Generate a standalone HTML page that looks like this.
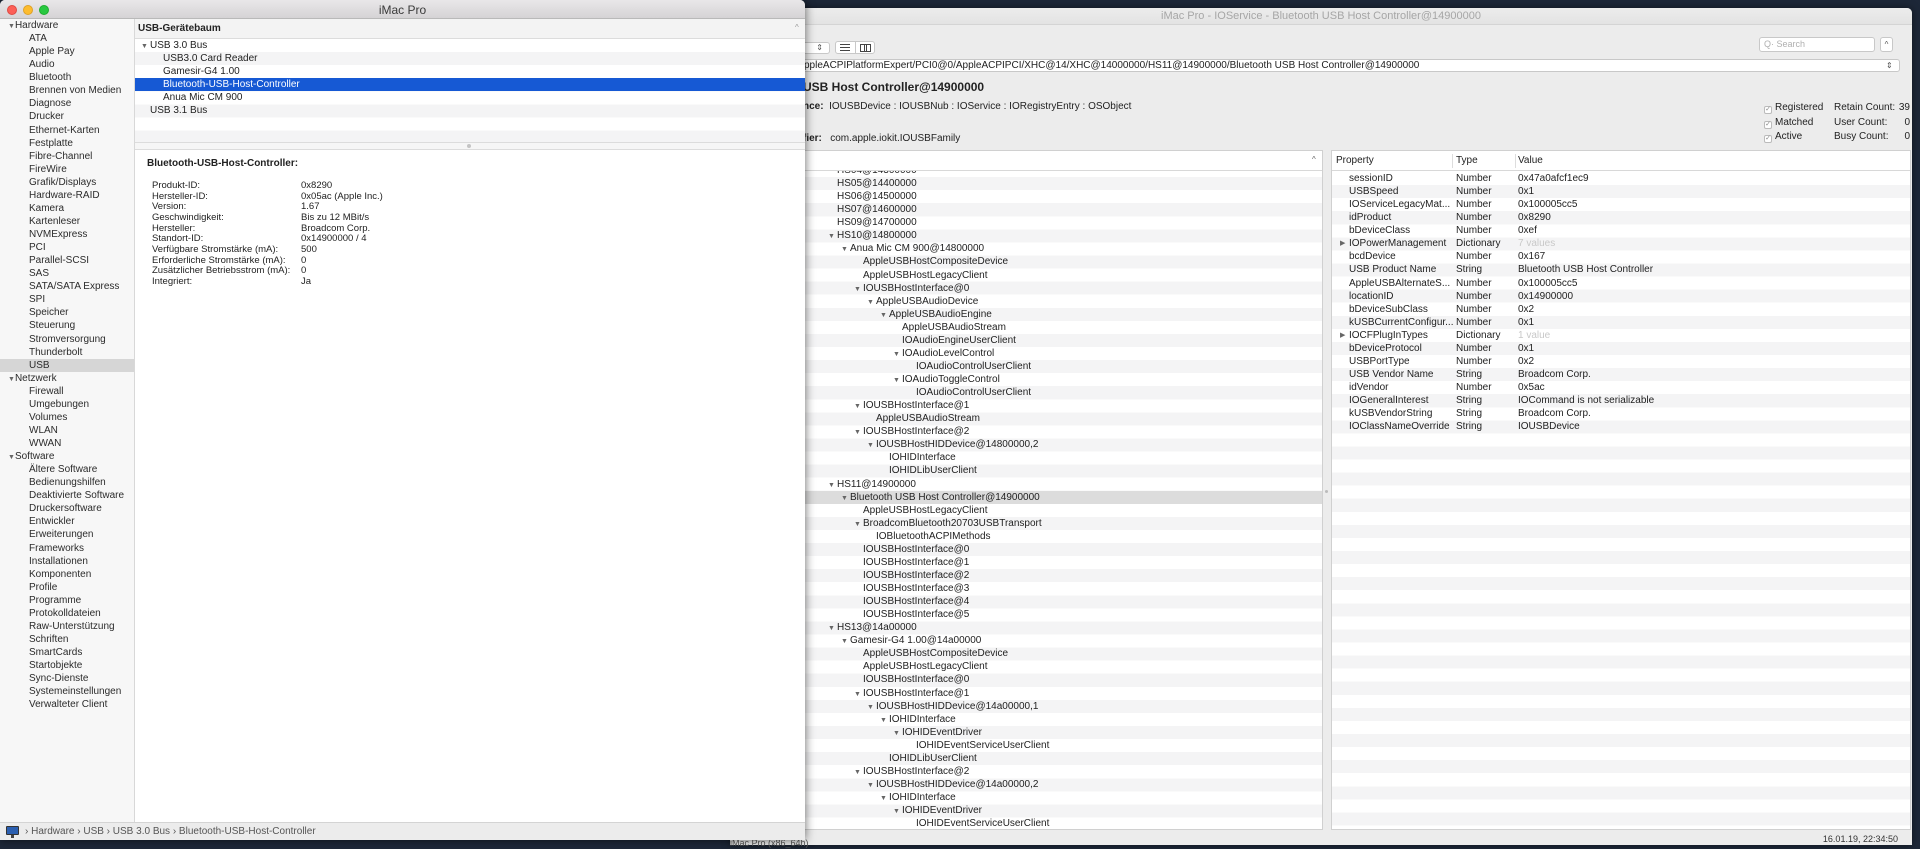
<!DOCTYPE html>
<html><head><meta charset="utf-8"><style>
*{margin:0;padding:0;box-sizing:border-box}
body{width:1920px;height:849px;overflow:hidden;background:#1d2738;font-family:"Liberation Sans",sans-serif;font-size:10px;color:#222;position:relative}
.a{position:absolute;white-space:nowrap}
#rw{position:absolute;left:730px;top:8px;width:1182px;height:837px;background:#ececec;border-radius:5px 5px 0 0;box-shadow:0 0 8px rgba(0,0,0,.5)}
#lw{position:absolute;left:0;top:0;width:805px;height:840px;background:#fff;border-radius:5px 5px 0 0;box-shadow:0 0 10px rgba(0,0,0,.6);overflow:hidden;z-index:5}
.rows div{height:13.07px;line-height:13.07px;white-space:nowrap}
.t{font-size:7px;color:#666;display:inline-block;width:9px;margin-left:-9px;text-align:left}
.stripe{background:repeating-linear-gradient(#fff 0 13.07px,#f4f4f5 13.07px 26.14px)}
.sb div{height:13.07px;line-height:13.07px;padding-left:29px;color:#2b2b2b}
.sb div.h{padding-left:8px}
.cb{display:inline-block;width:8px;height:8px;border:1px solid #bbb;border-radius:2px;background:#fff;font-size:7px;line-height:6px;color:#888;text-align:center;margin-right:3px;vertical-align:-1px}
</style></head><body>

<!-- Right window -->
<div id="rw">
 <div class="a" style="left:0;top:0;width:1182px;height:17px;background:linear-gradient(#ececec,#e3e3e3);border-radius:5px 5px 0 0;border-bottom:1px solid #d4d4d4"></div>
 <div class="a" style="left:0;top:2px;width:1182px;text-align:center;font-size:11px;color:#a6a6a6">iMac Pro - IOService - Bluetooth USB Host Controller@14900000</div>
</div>
<!-- toolbar -->
<div class="a" style="left:790px;top:42px;width:40px;height:12px;background:#fff;border:1px solid #c8c8c8;border-radius:3px;z-index:2;font-size:8px;text-align:right;padding-right:6px;line-height:10px;color:#555">⇕</div>
<div class="a" style="left:835px;top:41px;width:40px;height:13px;background:#fff;border:1px solid #c8c8c8;border-radius:3px;z-index:2"></div>
<div class="a" style="left:855px;top:41px;width:1px;height:13px;background:#c8c8c8;z-index:2"></div>
<div class="a" style="left:840px;top:44px;width:10px;height:7px;border-top:1px solid #444;border-bottom:1px solid #444;z-index:2"></div>
<div class="a" style="left:840px;top:47px;width:10px;height:1px;background:#444;z-index:2"></div>
<div class="a" style="left:860px;top:44px;width:11px;height:8px;border:1px solid #444;z-index:2"></div>
<div class="a" style="left:864px;top:44px;width:3px;height:8px;border-left:1px solid #444;border-right:1px solid #444;z-index:2"></div>
<div class="a" style="left:1759px;top:37px;width:116px;height:15px;background:#fff;border:1px solid #c8c8c8;border-radius:3px;z-index:2;color:#b0b0b0;font-size:9px;line-height:13px;padding-left:4px">Q· Search</div>
<div class="a" style="left:1880px;top:37px;width:13px;height:15px;background:#fff;border:1px solid #c8c8c8;border-radius:3px;z-index:2;font-size:8px;text-align:center;line-height:13px;color:#555">^</div>
<div class="a" style="left:790px;top:59px;width:1110px;height:13px;background:#fff;border:1px solid #c8c8c8;border-radius:3px;z-index:2"></div>
<div class="a" style="left:804px;top:59px;line-height:13px;font-size:10px;z-index:2">ppleACPIPlatformExpert/PCI0@0/AppleACPIPCI/XHC@14/XHC@14000000/HS11@14900000/Bluetooth USB Host Controller@14900000</div>
<div class="a" style="left:1886px;top:59px;line-height:13px;font-size:8px;color:#555;z-index:2">⇕</div>
<div class="a" style="left:803px;top:80px;font-size:12px;font-weight:bold;z-index:2">USB Host Controller@14900000</div>
<div class="a" style="left:803px;top:101px;font-size:10px;z-index:2"><b>nce:</b>&nbsp; IOUSBDevice : IOUSBNub : IOService : IORegistryEntry : OSObject</div>
<div class="a" style="left:803px;top:133px;font-size:10px;z-index:2"><b>fier:</b>&nbsp;&nbsp; com.apple.iokit.IOUSBFamily</div>
<div class="a" style="left:1764px;top:101px;font-size:10px;z-index:2;line-height:14.5px"><div><span class="cb">✓</span>Registered</div><div><span class="cb">✓</span>Matched</div><div><span class="cb">✓</span>Active</div></div>
<div class="a" style="left:1834px;top:101px;font-size:10px;z-index:2;line-height:14.5px;width:76px"><div>Retain Count:<span style="float:right">39</span></div><div>User Count:<span style="float:right">0</span></div><div>Busy Count:<span style="float:right">0</span></div></div>

<!-- tree pane -->
<div class="a" style="left:740px;top:150px;width:583px;height:680px;background:#fff;border:1px solid #d0d0d0;overflow:hidden;z-index:2">
 <div class="a" style="left:0;top:0;width:583px;height:20px;background:#fff;border-bottom:1px solid #d8d8d8;z-index:3"></div>
 <div class="a" style="left:571px;top:4px;font-size:8px;color:#666;z-index:3">^</div>
 <div class="a rows stripe" style="left:0;top:13px;width:583px;height:680px">
<div style="padding-left:96px">HS04@14300000</div>
<div style="padding-left:96px">HS05@14400000</div>
<div style="padding-left:96px">HS06@14500000</div>
<div style="padding-left:96px">HS07@14600000</div>
<div style="padding-left:96px">HS09@14700000</div>
<div style="padding-left:96px"><span class="t">▼</span>HS10@14800000</div>
<div style="padding-left:109px"><span class="t">▼</span>Anua Mic CM 900@14800000</div>
<div style="padding-left:122px">AppleUSBHostCompositeDevice</div>
<div style="padding-left:122px">AppleUSBHostLegacyClient</div>
<div style="padding-left:122px"><span class="t">▼</span>IOUSBHostInterface@0</div>
<div style="padding-left:135px"><span class="t">▼</span>AppleUSBAudioDevice</div>
<div style="padding-left:148px"><span class="t">▼</span>AppleUSBAudioEngine</div>
<div style="padding-left:161px">AppleUSBAudioStream</div>
<div style="padding-left:161px">IOAudioEngineUserClient</div>
<div style="padding-left:161px"><span class="t">▼</span>IOAudioLevelControl</div>
<div style="padding-left:175px">IOAudioControlUserClient</div>
<div style="padding-left:161px"><span class="t">▼</span>IOAudioToggleControl</div>
<div style="padding-left:175px">IOAudioControlUserClient</div>
<div style="padding-left:122px"><span class="t">▼</span>IOUSBHostInterface@1</div>
<div style="padding-left:135px">AppleUSBAudioStream</div>
<div style="padding-left:122px"><span class="t">▼</span>IOUSBHostInterface@2</div>
<div style="padding-left:135px"><span class="t">▼</span>IOUSBHostHIDDevice@14800000,2</div>
<div style="padding-left:148px">IOHIDInterface</div>
<div style="padding-left:148px">IOHIDLibUserClient</div>
<div style="padding-left:96px"><span class="t">▼</span>HS11@14900000</div>
<div style="padding-left:109px;background:#dcdcdc"><span class="t">▼</span>Bluetooth USB Host Controller@14900000</div>
<div style="padding-left:122px">AppleUSBHostLegacyClient</div>
<div style="padding-left:122px"><span class="t">▼</span>BroadcomBluetooth20703USBTransport</div>
<div style="padding-left:135px">IOBluetoothACPIMethods</div>
<div style="padding-left:122px">IOUSBHostInterface@0</div>
<div style="padding-left:122px">IOUSBHostInterface@1</div>
<div style="padding-left:122px">IOUSBHostInterface@2</div>
<div style="padding-left:122px">IOUSBHostInterface@3</div>
<div style="padding-left:122px">IOUSBHostInterface@4</div>
<div style="padding-left:122px">IOUSBHostInterface@5</div>
<div style="padding-left:96px"><span class="t">▼</span>HS13@14a00000</div>
<div style="padding-left:109px"><span class="t">▼</span>Gamesir-G4 1.00@14a00000</div>
<div style="padding-left:122px">AppleUSBHostCompositeDevice</div>
<div style="padding-left:122px">AppleUSBHostLegacyClient</div>
<div style="padding-left:122px">IOUSBHostInterface@0</div>
<div style="padding-left:122px"><span class="t">▼</span>IOUSBHostInterface@1</div>
<div style="padding-left:135px"><span class="t">▼</span>IOUSBHostHIDDevice@14a00000,1</div>
<div style="padding-left:148px"><span class="t">▼</span>IOHIDInterface</div>
<div style="padding-left:161px"><span class="t">▼</span>IOHIDEventDriver</div>
<div style="padding-left:175px">IOHIDEventServiceUserClient</div>
<div style="padding-left:148px">IOHIDLibUserClient</div>
<div style="padding-left:122px"><span class="t">▼</span>IOUSBHostInterface@2</div>
<div style="padding-left:135px"><span class="t">▼</span>IOUSBHostHIDDevice@14a00000,2</div>
<div style="padding-left:148px"><span class="t">▼</span>IOHIDInterface</div>
<div style="padding-left:161px"><span class="t">▼</span>IOHIDEventDriver</div>
<div style="padding-left:175px">IOHIDEventServiceUserClient</div>
 </div>
</div>
<div class="a" style="left:1325px;top:490px;width:3px;height:3px;border-radius:50%;background:#bbb;z-index:2"></div>

<!-- property pane -->
<div class="a" style="left:1331px;top:150px;width:580px;height:680px;background:#fff;border:1px solid #d0d0d0;overflow:hidden;z-index:2">
 <div class="a" style="left:0;top:0;width:580px;height:20px;background:#fff;border-bottom:1px solid #d8d8d8;z-index:3;line-height:20px">
  <span class="a" style="left:4px">Property</span><span class="a" style="left:120px;top:3px;width:1px;height:14px;background:#ddd"></span>
  <span class="a" style="left:124px">Type</span><span class="a" style="left:183px;top:3px;width:1px;height:14px;background:#ddd"></span>
  <span class="a" style="left:186px">Value</span>
 </div>
 <div class="a rows stripe" style="left:0;top:21px;width:580px;height:680px">
<div><span class="a" style="left:17px">sessionID</span><span class="a" style="left:124px">Number</span><span class="a" style="left:186px">0x47a0afcf1ec9</span></div>
<div><span class="a" style="left:17px">USBSpeed</span><span class="a" style="left:124px">Number</span><span class="a" style="left:186px">0x1</span></div>
<div><span class="a" style="left:17px">IOServiceLegacyMat...</span><span class="a" style="left:124px">Number</span><span class="a" style="left:186px">0x100005cc5</span></div>
<div><span class="a" style="left:17px">idProduct</span><span class="a" style="left:124px">Number</span><span class="a" style="left:186px">0x8290</span></div>
<div><span class="a" style="left:17px">bDeviceClass</span><span class="a" style="left:124px">Number</span><span class="a" style="left:186px">0xef</span></div>
<div><span class="a" style="left:8px;font-size:7px;color:#666">▶</span><span class="a" style="left:17px">IOPowerManagement</span><span class="a" style="left:124px">Dictionary</span><span class="a" style="left:186px;color:#c8c8c8">7 values</span></div>
<div><span class="a" style="left:17px">bcdDevice</span><span class="a" style="left:124px">Number</span><span class="a" style="left:186px">0x167</span></div>
<div><span class="a" style="left:17px">USB Product Name</span><span class="a" style="left:124px">String</span><span class="a" style="left:186px">Bluetooth USB Host Controller</span></div>
<div><span class="a" style="left:17px">AppleUSBAlternateS...</span><span class="a" style="left:124px">Number</span><span class="a" style="left:186px">0x100005cc5</span></div>
<div><span class="a" style="left:17px">locationID</span><span class="a" style="left:124px">Number</span><span class="a" style="left:186px">0x14900000</span></div>
<div><span class="a" style="left:17px">bDeviceSubClass</span><span class="a" style="left:124px">Number</span><span class="a" style="left:186px">0x2</span></div>
<div><span class="a" style="left:17px">kUSBCurrentConfigur...</span><span class="a" style="left:124px">Number</span><span class="a" style="left:186px">0x1</span></div>
<div><span class="a" style="left:8px;font-size:7px;color:#666">▶</span><span class="a" style="left:17px">IOCFPlugInTypes</span><span class="a" style="left:124px">Dictionary</span><span class="a" style="left:186px;color:#c8c8c8">1 value</span></div>
<div><span class="a" style="left:17px">bDeviceProtocol</span><span class="a" style="left:124px">Number</span><span class="a" style="left:186px">0x1</span></div>
<div><span class="a" style="left:17px">USBPortType</span><span class="a" style="left:124px">Number</span><span class="a" style="left:186px">0x2</span></div>
<div><span class="a" style="left:17px">USB Vendor Name</span><span class="a" style="left:124px">String</span><span class="a" style="left:186px">Broadcom Corp.</span></div>
<div><span class="a" style="left:17px">idVendor</span><span class="a" style="left:124px">Number</span><span class="a" style="left:186px">0x5ac</span></div>
<div><span class="a" style="left:17px">IOGeneralInterest</span><span class="a" style="left:124px">String</span><span class="a" style="left:186px">IOCommand is not serializable</span></div>
<div><span class="a" style="left:17px">kUSBVendorString</span><span class="a" style="left:124px">String</span><span class="a" style="left:186px">Broadcom Corp.</span></div>
<div><span class="a" style="left:17px">IOClassNameOverride</span><span class="a" style="left:124px">String</span><span class="a" style="left:186px">IOUSBDevice</span></div>
 </div>
</div>
<div class="a" style="left:730px;top:838px;font-size:9px;color:#555;z-index:2">iMac Pro (x86_64h)</div>
<div class="a" style="left:1820px;top:834px;width:78px;text-align:right;font-size:9px;color:#333;z-index:2">16.01.19, 22:34:50</div>

<!-- Left window -->
<div id="lw">
 <div class="a" style="left:0;top:0;width:805px;height:19px;background:linear-gradient(#e9e7e9,#d5d3d5);border-bottom:1px solid #b9b9b9"></div>
 <div class="a" style="left:0;top:3px;width:805px;text-align:center;font-size:12px;color:#3a3a3a">iMac Pro</div>
 <div class="a" style="left:7px;top:5px;width:10px;height:10px;border-radius:50%;background:#fc5f57;border:.5px solid #de4a42"></div>
 <div class="a" style="left:23px;top:5px;width:10px;height:10px;border-radius:50%;background:#fdbc2e;border:.5px solid #dea127"></div>
 <div class="a" style="left:39px;top:5px;width:10px;height:10px;border-radius:50%;background:#28c840;border:.5px solid #1fac2e"></div>

 <div class="a" style="left:0;top:19px;width:135px;height:803px;background:#f7f7f7;border-right:1px solid #d8d8d8"></div>
 <div class="a" style="left:0;top:359px;width:134px;height:13px;background:#d6d6d6"></div>
 <div class="a sb" style="left:0;top:19px;width:135px">
<div class="h"><span style="font-size:7px;color:#666">▼</span>Hardware</div>
<div>ATA</div><div>Apple Pay</div><div>Audio</div><div>Bluetooth</div><div>Brennen von Medien</div><div>Diagnose</div><div>Drucker</div><div>Ethernet-Karten</div><div>Festplatte</div><div>Fibre-Channel</div><div>FireWire</div><div>Grafik/Displays</div><div>Hardware-RAID</div><div>Kamera</div><div>Kartenleser</div><div>NVMExpress</div><div>PCI</div><div>Parallel-SCSI</div><div>SAS</div><div>SATA/SATA Express</div><div>SPI</div><div>Speicher</div><div>Steuerung</div><div>Stromversorgung</div><div>Thunderbolt</div><div>USB</div>
<div class="h"><span style="font-size:7px;color:#666">▼</span>Netzwerk</div>
<div>Firewall</div><div>Umgebungen</div><div>Volumes</div><div>WLAN</div><div>WWAN</div>
<div class="h"><span style="font-size:7px;color:#666">▼</span>Software</div>
<div>Ältere Software</div><div>Bedienungshilfen</div><div>Deaktivierte Software</div><div>Druckersoftware</div><div>Entwickler</div><div>Erweiterungen</div><div>Frameworks</div><div>Installationen</div><div>Komponenten</div><div>Profile</div><div>Programme</div><div>Protokolldateien</div><div>Raw-Unterstützung</div><div>Schriften</div><div>SmartCards</div><div>Startobjekte</div><div>Sync-Dienste</div><div>Systemeinstellungen</div><div>Verwalteter Client</div>
 </div>

 <div class="a" style="left:135px;top:19px;width:670px;height:20px;background:#f3f3f3;border-bottom:1px solid #dcdcdc"></div>
 <div class="a" style="left:138px;top:23px;font-weight:bold">USB-Gerätebaum</div>
 <div class="a" style="left:795px;top:23px;font-size:8px;color:#999">^</div>
 <div class="a rows stripe" style="left:135px;top:39px;width:670px;height:103px">
  <div style="padding-left:15px"><span class="t">▼</span>USB 3.0 Bus</div>
  <div style="padding-left:28px">USB3.0 Card Reader</div>
  <div style="padding-left:28px">Gamesir-G4 1.00</div>
  <div style="padding-left:28px;background:#1659d4;color:#fff">Bluetooth-USB-Host-Controller</div>
  <div style="padding-left:28px">Anua Mic CM 900</div>
  <div style="padding-left:15px">USB 3.1 Bus</div>
 </div>
 <div class="a" style="left:135px;top:142px;width:670px;height:8px;background:#f6f6f6;border-top:1px solid #dcdcdc;border-bottom:1px solid #dcdcdc"></div>
 <div class="a" style="left:467px;top:144px;width:4px;height:4px;border-radius:50%;background:#c4c4c4"></div>

 <div class="a" style="left:147px;top:158px;font-weight:bold">Bluetooth-USB-Host-Controller:</div>
 <div class="a" style="left:152px;top:181px;line-height:10.67px;font-size:9.5px">Produkt-ID:<br>Hersteller-ID:<br>Version:<br>Geschwindigkeit:<br>Hersteller:<br>Standort-ID:<br>Verfügbare Stromstärke (mA):<br>Erforderliche Stromstärke (mA):<br>Zusätzlicher Betriebsstrom (mA):<br>Integriert:</div>
 <div class="a" style="left:301px;top:181px;line-height:10.67px;font-size:9.5px">0x8290<br>0x05ac (Apple Inc.)<br>1.67<br>Bis zu 12 MBit/s<br>Broadcom Corp.<br>0x14900000 / 4<br>500<br>0<br>0<br>Ja</div>

 <div class="a" style="left:0;top:822px;width:805px;height:18px;background:#ececec;border-top:1px solid #d4d4d4"></div>
 <div class="a" style="left:6px;top:826px;width:13px;height:9px;background:#2b5fb0;border:1px solid #333;border-radius:1px"></div>
 <div class="a" style="left:11px;top:835px;width:3px;height:3px;background:#444"></div>
 <div class="a" style="left:25px;top:826px;font-size:10px;color:#555">› Hardware › USB › USB 3.0 Bus › Bluetooth-USB-Host-Controller</div>
</div>
</body></html>
